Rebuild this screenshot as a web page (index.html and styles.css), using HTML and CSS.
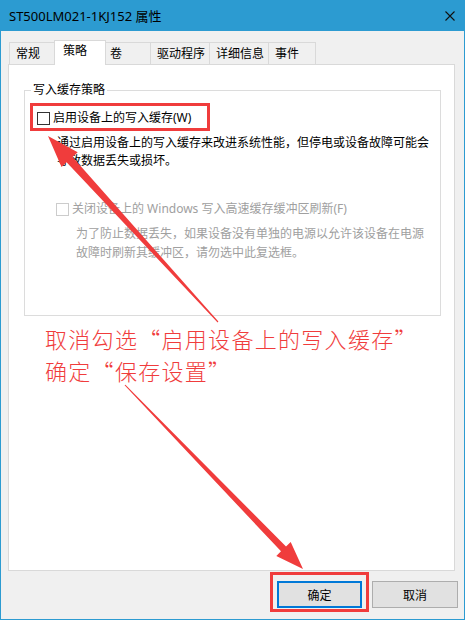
FILE: index.html
```html
<!DOCTYPE html>
<html lang="zh-CN">
<head>
<meta charset="utf-8">
<title>ST500LM021-1KJ152 属性</title>
<link rel="stylesheet" href="styles.css">
</head>
<body>
<div class="window">
  <div class="titlebar">
    <span class="title">ST500LM021-1KJ152 属性</span>
    <svg class="close" width="10" height="10" viewBox="0 0 10 10">
      <path d="M0.5 0.5 L9.5 9.5 M9.5 0.5 L0.5 9.5" stroke="#111" stroke-width="1.1" fill="none"/>
    </svg>
  </div>

  <div class="tabs">
    <div class="tab">常规</div>
    <div class="tab active">策略</div>
    <div class="tab">卷</div>
    <div class="tab">驱动程序</div>
    <div class="tab">详细信息</div>
    <div class="tab">事件</div>
  </div>

  <div class="panel">
    <fieldset class="group">
      <legend>写入缓存策略</legend>
      <div class="check-row row-main"><span class="box"></span>启用设备上的写入缓存(W)</div>
      <p class="hint hint-main">通过启用设备上的写入缓存来改进系统性能，但停电或设备故障可能会导致数据丢失或损坏。</p>
      <div class="check-row row-sub disabled"><span class="box"></span>关闭设备上的 Windows 写入高速缓存缓冲区刷新(F)</div>
      <p class="hint hint-sub disabled">为了防止数据丢失，如果设备没有单独的电源以允许该设备在电源故障时刷新其缓冲区，请勿选中此复选框。</p>
    </fieldset>
  </div>

  <div class="footer">
    <button class="btn btn-default">确定</button>
    <button class="btn">取消</button>
  </div>

  <div class="annotations">
    <svg class="marks" width="465" height="620" viewBox="0 0 465 620">
      <rect x="31.5" y="104.5" width="177" height="25" fill="none" stroke="#f03c3c" stroke-width="3"/>
      <rect x="271.5" y="573.5" width="96" height="37" fill="none" stroke="#f03c3c" stroke-width="3"/>
      <polygon points="218.4,321.6 72.6,156.9 77.7,152.2 48,136 61.5,167 66.6,162.3 217.6,322.4" fill="#f03c3c"/>
      <polygon points="125.4,384.7 286,546.5 290.7,541.9 303,569 276.3,555.9 281,551.3 124.6,385.3" fill="#f03c3c"/>
    </svg>
    <div class="note">
      <div class="note-line">取消勾选“启用设备上的写入缓存”</div>
      <div class="note-line">确定“保存设置”</div>
    </div>
  </div>
</div>
</body>
</html>
```

FILE: styles.css
```css
html, body {
  margin: 0;
  padding: 0;
}

body {
  width: 465px;
  height: 620px;
  overflow: hidden;
  font-family: "Noto Sans", "Noto Sans CJK SC", sans-serif;
  font-size: 12px;
  color: #000;
}

.window {
  position: relative;
  box-sizing: border-box;
  width: 465px;
  height: 620px;
  border: 1px solid #2c9bd1;
  border-top: 0;
  background: #f0f0f0;
  display: flex;
  flex-direction: column;
}

/* title bar */
.titlebar {
  flex: none;
  height: 31px;
  background: #2c9bd1;
  display: flex;
  align-items: center;
  justify-content: space-between;
  padding: 0 9px 0 8px;
}

.title {
  font-size: 13px;
  line-height: 16px;
  color: #000;
}

.close {
  display: block;
}

/* tab strip */
.tabs {
  flex: none;
  position: relative;
  z-index: 1;
  display: flex;
  align-items: flex-end;
  height: 24px;
  margin: 9px 0 0 8px;
}

.tab {
  box-sizing: border-box;
  height: 22px;
  min-width: 48px;
  padding: 0 4px 0 6px;
  border: 1px solid #d9d9d9;
  border-bottom: 0;
  margin-left: -1px;
  line-height: 21px;
  background: #f0f0f0;
  white-space: nowrap;
}

.tab:first-child {
  margin-left: 0;
}

.tab.active {
  position: relative;
  height: 25px;
  min-width: 52px;
  margin: 0 -2px -1px -3px;
  padding: 0 4px 0 8px;
  line-height: 20px;
  background: #fff;
}

/* property page */
.panel {
  flex: none;
  box-sizing: border-box;
  height: 507px;
  margin: 0 9px 0 7px;
  padding: 17px 13px 0 15px;
  background: #fff;
  border: 1px solid #d9d9d9;
}

.group {
  box-sizing: border-box;
  height: 234px;
  min-width: 0;
  margin: 0;
  padding: 11px 0 0 0;
  border: 1px solid #dcdcdc;
}

.group legend {
  margin-left: 6px;
  padding: 0 2px;
  line-height: 16px;
}

.check-row {
  display: flex;
  align-items: center;
  height: 18px;
  line-height: 18px;
  white-space: nowrap;
}

.box {
  flex: none;
  box-sizing: border-box;
  width: 13px;
  height: 13px;
  margin-right: 3px;
  border: 1px solid #333;
  background: #fff;
}

.row-main {
  margin-left: 12px;
}

.hint {
  margin: 0;
}

.hint-main {
  margin: 7px 0 0 32px;
  max-width: 374px;
  line-height: 18px;
}

.row-sub {
  margin: 30px 0 0 31px;
}

.hint-sub {
  margin: 6px 0 0 51px;
  max-width: 350px;
  line-height: 19px;
}

.disabled {
  color: #a0a0a0;
}

.disabled .box {
  border-color: #cccccc;
}

/* dialog buttons */
.footer {
  flex: 1;
  display: flex;
  justify-content: flex-end;
  align-items: flex-start;
  gap: 10px;
  padding: 10px 6px 0 0;
}

.btn {
  box-sizing: border-box;
  width: 85px;
  height: 27px;
  padding: 0;
  background: #e1e1e1;
  border: 1px solid #adadad;
  font-family: inherit;
  font-size: 12px;
  color: #000;
}

.btn + .btn {
  width: 86px;
}

.btn-default {
  border: 2px solid #0078d7;
}

/* red markup drawn over the dialog */
.annotations {
  position: absolute;
  left: -1px;
  top: 0;
  width: 465px;
  height: 620px;
  pointer-events: none;
}

.marks {
  position: absolute;
  left: 0;
  top: 0;
}

.note {
  position: absolute;
  left: 45px;
  top: 322px;
  font-family: "Noto Sans CJK SC", sans-serif;
  font-size: 22px;
  font-weight: 300;
  letter-spacing: 1.3px;
  color: #f03c3c;
  white-space: nowrap;
}

.note-line {
  height: 32px;
  line-height: 32px;
}
```
